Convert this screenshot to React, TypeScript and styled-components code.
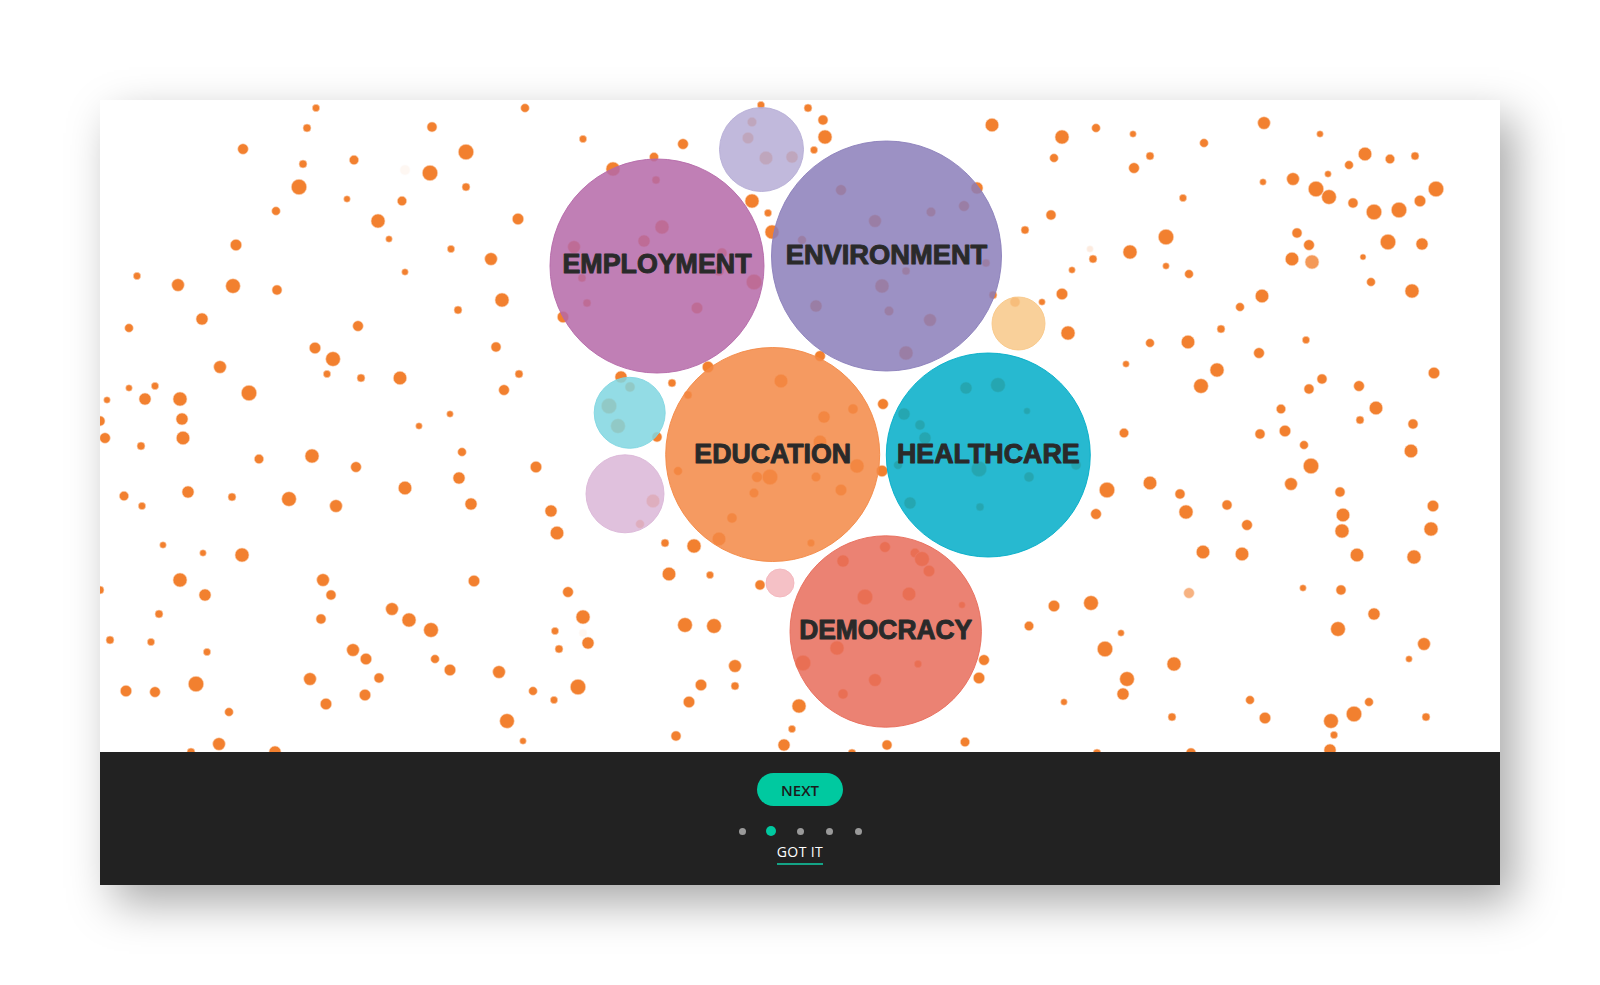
import styled, { createGlobalStyle } from "styled-components";

type Dot = [number, number, number, number?];

const GlobalStyle = createGlobalStyle`
  html, body {
    margin: 0;
    padding: 0;
    background: #fff;
  }
  body {
    font-family: "Open Sans", "Liberation Sans", sans-serif;
  }
`;

const Page = styled.main`
  width: 1400px;
  padding: 100px;
`;

const Card = styled.section`
  width: 1400px;
  background: #fff;
  box-shadow: 14px 18px 42px rgba(0, 0, 0, 0.34);
`;

const Plot = styled.svg`
  display: block;
  width: 1400px;
  height: 652px;
`;

const Footer = styled.footer`
  height: 133px;
  box-sizing: border-box;
  padding-top: 21px;
  background: #222;
  display: flex;
  flex-direction: column;
  align-items: center;
`;

const NextButton = styled.button`
  width: 86px;
  height: 33px;
  padding: 0;
  border: none;
  border-radius: 17px;
  background: #00c9a0;
  color: #1b1b1b;
  font: 600 15px "Open Sans", sans-serif;
  display: flex;
  align-items: center;
  justify-content: center;
  cursor: pointer;
`;

const Pager = styled.div`
  margin-top: 20px;
  height: 10px;
  display: flex;
  gap: 19px;
  align-items: center;
`;

const PagerSlot = styled.span`
  width: 10px;
  height: 10px;
  display: flex;
  align-items: center;
  justify-content: center;
`;

const PagerDot = styled.span<{ $active?: boolean }>`
  width: ${(p) => (p.$active ? 10 : 7)}px;
  height: ${(p) => (p.$active ? 10 : 7)}px;
  border-radius: 50%;
  background: ${(p) => (p.$active ? "#00c9a0" : "#9a9a9a")};
`;

const GotIt = styled.a`
  margin-top: 8px;
  padding-bottom: 3px;
  border-bottom: 2px solid #14a386;
  color: #fff;
  font: 500 14px/16px "Open Sans", sans-serif;
  letter-spacing: 0.4px;
  text-decoration: none;
  cursor: pointer;
`;

const DOT_COLOR = "#f2802f";

const dots: Dot[] = [
  // left field
  [216, 8, 3.7], [207, 28, 4], [143, 49, 5.3], [203, 64, 4], [254, 60, 4.7], [199, 87, 7.7],
  [330, 73, 7.7], [366, 52, 7.7], [332, 27, 5], [425, 8, 4.3], [366, 87, 4], [176, 111, 4.3],
  [247, 99, 3.3], [302, 101, 4.7], [278, 121, 7], [289, 139, 3.3], [418, 119, 5.7], [351, 149, 3.7],
  [391, 159, 6.3], [136, 145, 5.7], [37, 176, 3.7], [78, 185, 6.3], [133, 186, 7.3], [177, 190, 5],
  [305, 172, 3.3], [402, 200, 7], [358, 210, 4], [102, 219, 6], [29, 228, 4.3], [258, 226, 5.3],
  [215, 248, 5.7], [233, 259, 7.3], [227, 274, 3.7], [261, 278, 4], [300, 278, 6.7], [396, 247, 5],
  [419, 274, 4], [404, 290, 5.3], [120, 267, 6.3], [29, 288, 3.3], [55, 286, 3.7], [7, 300, 3.3],
  [45, 299, 6], [80, 299, 7], [149, 293, 7.7], [350, 314, 3.3], [319, 326, 3.3], [0, 321, 5],
  [82, 319, 6], [5, 338, 5.3], [41, 346, 4], [83, 338, 6.7], [159, 359, 4.7], [212, 356, 7],
  [256, 367, 5.3], [362, 352, 4.3], [436, 367, 5.7], [359, 378, 6], [371, 404, 6], [305, 388, 6.7],
  [24, 396, 4.7], [42, 406, 3.7], [88, 392, 6], [132, 397, 4], [189, 399, 7.3], [236, 406, 6.3],
  [451, 411, 6], [457, 433, 6.7], [63, 445, 3.3], [103, 453, 3.3], [142, 455, 7], [80, 480, 7],
  [105, 495, 6], [0, 490, 4], [223, 480, 6.3], [231, 495, 5], [374, 481, 5.7], [292, 509, 6.3],
  [309, 520, 7], [331, 530, 7.3], [221, 519, 5], [59, 514, 4], [10, 540, 4], [51, 542, 3.7],
  [107, 552, 3.7], [455, 531, 3.7], [459, 549, 4], [253, 550, 6.3], [266, 559, 5.7], [279, 578, 5],
  [335, 559, 4.3], [350, 570, 5.7], [399, 572, 6.3], [433, 591, 4.3], [454, 600, 3.7], [26, 591, 5.7],
  [55, 592, 5.3], [96, 584, 7.7], [210, 579, 6.3], [265, 595, 5.7], [226, 604, 5.7], [129, 612, 4.3],
  [407, 621, 7.3], [423, 641, 3.3], [119, 644, 6.3], [91, 652, 4], [175, 652, 6],
  [305, 70, 5, 0.06],
  // right field
  [962, 37, 7], [996, 28, 4.3], [1033, 34, 3.3], [1104, 43, 4.3], [1164, 23, 6.3], [1220, 34, 3.3],
  [954, 58, 4.3], [1050, 56, 4], [1034, 68, 5.3], [1265, 54, 6.7], [1290, 59, 4.7], [1315, 56, 4],
  [1249, 65, 4.3], [1228, 74, 3.3], [1163, 82, 3.3], [1193, 79, 6.3], [1216, 89, 7.7], [1229, 97, 7.3],
  [1253, 103, 5], [1274, 112, 7.7], [1299, 110, 7.7], [1320, 101, 5.7], [1336, 89, 7.7], [1083, 98, 3.7],
  [951, 115, 5], [1066, 137, 7.7], [1030, 152, 7], [993, 159, 4], [972, 170, 3.3], [1066, 166, 3.3],
  [1089, 174, 4.3], [1197, 133, 5], [1209, 145, 5.3], [1192, 159, 6.7], [1212, 162, 7, 0.8], [1263, 157, 3],
  [1288, 142, 7.7], [1322, 144, 6], [1271, 182, 4.3], [1312, 191, 7], [1162, 196, 6.7], [1140, 207, 4.3],
  [962, 194, 5.7], [942, 202, 3.3], [968, 233, 7], [1121, 229, 4], [1050, 243, 4.3], [1088, 242, 6.7],
  [1159, 253, 5.3], [1206, 240, 3.7], [1026, 264, 3.3], [1117, 270, 7], [1101, 286, 7.3], [1222, 279, 5],
  [1209, 289, 5], [1259, 286, 5.3], [1334, 273, 5.7], [1181, 309, 4.7], [1276, 308, 6.7], [1260, 320, 4],
  [1313, 324, 5], [990, 149, 3.3, 0.15], [925, 130, 4],
  [1024, 333, 4.7], [1160, 334, 5], [1185, 331, 5.7], [1204, 345, 4.3], [1311, 351, 6.7], [1211, 366, 7.7],
  [1191, 384, 6.3], [1050, 383, 6.7], [1007, 390, 7.7], [1080, 394, 5], [1086, 412, 7], [996, 414, 5.3],
  [1127, 405, 5], [1147, 425, 5.3], [1240, 392, 5], [1243, 415, 6.7], [1242, 431, 7], [1333, 406, 5.7],
  [1331, 429, 7], [1103, 452, 6.7], [1142, 454, 6.7], [1257, 455, 6.7], [1314, 457, 7], [1089, 493, 5.3, 0.6],
  [1203, 488, 3.3], [1241, 490, 5], [954, 506, 5.7], [991, 503, 7.3], [1274, 514, 6], [1238, 529, 7.3],
  [1021, 533, 3.3], [1005, 549, 7.7], [1324, 544, 6.3], [1309, 559, 3.3], [1074, 564, 7], [1027, 579, 7.3],
  [1023, 594, 6], [964, 602, 3.3], [1150, 600, 4.3], [1269, 602, 4.3], [1072, 617, 4], [1165, 618, 5.7],
  [1231, 621, 7.3], [1254, 614, 7.7], [1326, 617, 4], [1234, 635, 3.7], [1230, 650, 6], [1091, 653, 5],
  [997, 653, 4],
  // middle, around and under the bubbles
  [565, 443, 4], [594, 446, 7], [711, 443, 3.7], [569, 474, 6.7], [610, 475, 3.7], [660, 485, 5],
  [468, 492, 5.3], [483, 517, 7], [488, 543, 6], [585, 525, 7.3], [614, 526, 7.3], [635, 566, 6.3],
  [601, 585, 5.7], [635, 586, 4], [589, 602, 5.7], [478, 587, 7.7], [576, 636, 5], [699, 606, 7],
  [692, 629, 3.7], [684, 645, 6], [787, 645, 5], [865, 642, 4.7], [884, 560, 5.3], [879, 578, 5.7],
  [929, 526, 4.7], [752, 653, 4], [483, 533, 4, 0.06],
  [743, 461, 6], [785, 447, 5.3], [815, 453, 4.7], [822, 459, 7.3], [829, 471, 5.7], [765, 497, 7.7],
  [809, 494, 6.7], [862, 505, 3.3], [737, 548, 7], [703, 563, 7.7], [818, 564, 3.7], [775, 580, 6.3],
  [743, 594, 5],
  [483, 39, 3.7], [583, 44, 5.3], [554, 57, 4.5], [661, 5, 3.7], [708, 8, 4], [723, 20, 5],
  [725, 37, 7], [714, 50, 3.7], [892, 25, 6.7],
  [652, 22, 4.7], [648, 38, 5.7], [666, 58, 6.7], [692, 57, 6],
  [513, 69, 7], [652, 101, 7], [668, 113, 3.7], [672, 132, 7], [877, 88, 6], [893, 195, 4], [915, 202, 5],
  [556, 80, 4], [562, 127, 7], [544, 141, 6], [474, 147, 6.3], [482, 178, 4], [622, 153, 5],
  [619, 171, 5], [654, 182, 7.7], [487, 203, 4], [597, 208, 5.7], [463, 217, 5.7],
  [741, 90, 5.3], [831, 112, 4.7], [864, 106, 5.3], [775, 121, 6.3], [702, 140, 4.3], [886, 163, 4],
  [806, 171, 4], [782, 186, 7], [716, 206, 6], [789, 211, 4.7], [830, 220, 6.3], [806, 253, 7],
  [720, 256, 5.3], [608, 267, 5.7], [521, 277, 6],
  [530, 287, 5], [509, 306, 7.7], [518, 326, 7.3], [557, 337, 5], [572, 283, 4], [588, 295, 4],
  [681, 281, 6.7], [724, 317, 6], [753, 309, 5], [720, 342, 6.7], [757, 366, 7], [670, 377, 7.7],
  [657, 377, 5.3], [716, 377, 4.7], [654, 393, 4.7], [741, 390, 5.7], [578, 371, 4.3], [632, 418, 5],
  [619, 439, 6.7], [783, 304, 5.3], [782, 371, 5.7], [553, 401, 6.7], [540, 424, 4.3],
  [866, 288, 6], [898, 285, 7.3], [927, 311, 3.3], [804, 314, 6], [820, 325, 5], [825, 338, 6],
  [879, 369, 7.7], [798, 365, 4.3], [929, 377, 5], [976, 365, 5], [810, 403, 6], [880, 407, 4],
];

type Bubble = { cx: number; cy: number; r: number; fill: string; label?: string; ly?: number; width?: number };

const bubbles: Bubble[] = [
  { cx: 661.5, cy: 49.5, r: 42, fill: "#b6add6" },
  { cx: 918.5, cy: 223.5, r: 26.5, fill: "#f8c888" },
  { cx: 529.7, cy: 312.8, r: 35.5, fill: "#80d6e1" },
  { cx: 525, cy: 393.8, r: 39, fill: "#dab6d7" },
  { cx: 680, cy: 483, r: 14, fill: "#f3b6bc" },
  { cx: 557, cy: 166, r: 107, fill: "#b568a8", label: "EMPLOYMENT", ly: 172.7, width: 189 },
  { cx: 786.5, cy: 156, r: 115, fill: "#8b7eba", label: "ENVIRONMENT", ly: 163.5, width: 201.6 },
  { cx: 672.7, cy: 354.5, r: 107, fill: "#f38845", label: "EDUCATION", ly: 362.7, width: 156.7 },
  { cx: 888.3, cy: 355, r: 102, fill: "#01adc8", label: "HEALTHCARE", ly: 362.7, width: 182.7 },
  { cx: 785.7, cy: 531.5, r: 95.7, fill: "#e86c5a", label: "DEMOCRACY", ly: 539, width: 173 },
];

const BubbleChart = () => (
  <Plot viewBox="0 0 1400 652">
    <g>
      {dots.map(([x, y, r, o], i) => (
        <circle
          key={i}
          cx={x}
          cy={y}
          r={r}
          fill={DOT_COLOR}
          opacity={o ?? 1}
          stroke="#fbd9c0"
          strokeWidth={0.6}
        />
      ))}
    </g>
    <g>
      {bubbles.map((b, i) => (
        <circle
          key={i}
          cx={b.cx}
          cy={b.cy}
          r={b.r}
          fill={b.fill}
          fillOpacity={0.85}
          stroke={b.fill}
          strokeOpacity={0.9}
          strokeWidth={1}
        />
      ))}
    </g>
    <g
      fontFamily='"Liberation Sans", Arial, sans-serif'
      fontWeight={700}
      fontSize={27}
      fill="#2a2a2a"
      stroke="#2a2a2a"
      strokeWidth={1}
      strokeLinejoin="round"
      textAnchor="middle"
    >
      {bubbles
        .filter((b) => b.label)
        .map((b) => (
          <text
            key={b.label}
            x={b.cx}
            y={b.ly}
            textLength={b.width}
            lengthAdjust="spacingAndGlyphs"
          >
            {b.label}
          </text>
        ))}
    </g>
  </Plot>
);

const pages = [false, true, false, false, false];

export default function App() {
  return (
    <>
      <GlobalStyle />
      <Page>
        <Card>
          <BubbleChart />
          <Footer>
            <NextButton>NEXT</NextButton>
            <Pager>
              {pages.map((active, i) => (
                <PagerSlot key={i}>
                  <PagerDot $active={active} />
                </PagerSlot>
              ))}
            </Pager>
            <GotIt>GOT IT</GotIt>
          </Footer>
        </Card>
      </Page>
    </>
  );
}
